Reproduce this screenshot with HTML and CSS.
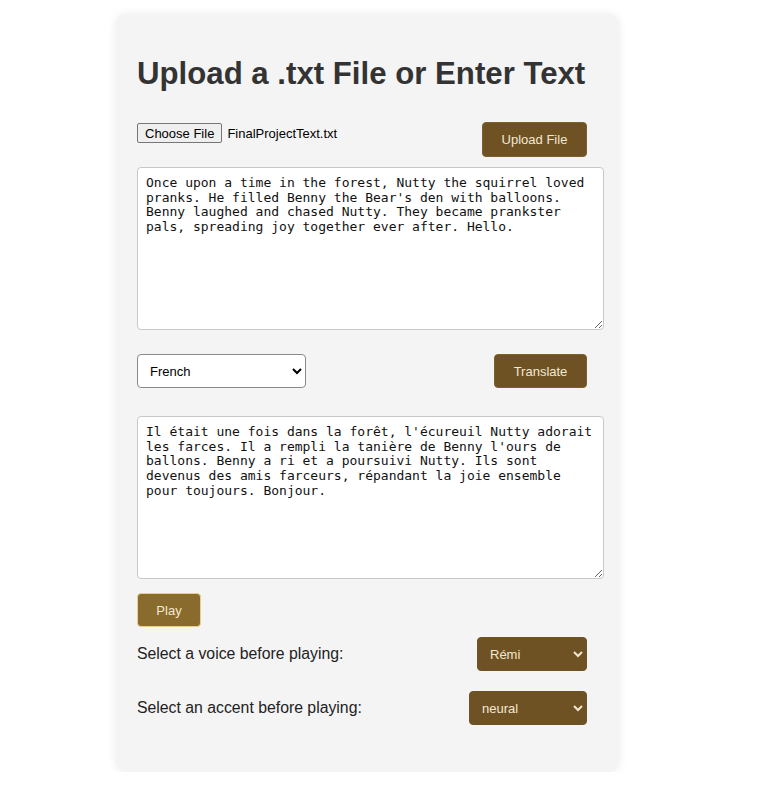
FILE: index.html
```html
<!DOCTYPE html>
<html lang="en">
<head>
<meta charset="utf-8">
<title>Upload a .txt File or Enter Text</title>
<link rel="stylesheet" href="styles.css">
</head>
<body>
<main class="card">
  <h1 class="title">Upload a .txt File or Enter Text</h1>

  <div class="row file-row">
    <div class="file-picker">
      <label class="choose-btn" for="file">Choose File</label>
      <input class="file-hidden" type="file" id="file" accept=".txt">
      <span class="file-name">FinalProjectText.txt</span>
    </div>
    <button class="btn btn-upload" type="button">Upload File</button>
  </div>

  <textarea class="text-box" spellcheck="false">Once upon a time in the forest, Nutty the squirrel loved pranks. He filled Benny the Bear's den with balloons. Benny laughed and chased Nutty. They became prankster pals, spreading joy together ever after. Hello.</textarea>

  <div class="row lang-row">
    <select class="lang-select">
      <option>French</option>
      <option>Spanish</option>
      <option>German</option>
    </select>
    <button class="btn btn-translate" type="button">Translate</button>
  </div>

  <textarea class="text-box text-out" spellcheck="false">Il était une fois dans la forêt, l'écureuil Nutty adorait les farces. Il a rempli la tanière de Benny l'ours de ballons. Benny a ri et a poursuivi Nutty. Ils sont devenus des amis farceurs, répandant la joie ensemble pour toujours. Bonjour.</textarea>

  <button class="btn btn-play" type="button">Play</button>

  <div class="row option-row voice-row">
    <span class="option-label">Select a voice before playing:</span>
    <select class="dark-select voice-select">
      <option>Rémi</option>
      <option>Léa</option>
    </select>
  </div>

  <div class="row option-row accent-row">
    <span class="option-label">Select an accent before playing:</span>
    <select class="dark-select accent-select">
      <option>neural</option>
      <option>standard</option>
    </select>
  </div>
</main>
</body>
</html>
```

FILE: styles.css
```css
html, body {
  margin: 0;
  padding: 0;
  background: #ffffff;
}

body {
  font-family: "Liberation Sans", Arial, sans-serif;
  color: #222;
}

.card {
  box-sizing: border-box;
  width: 503px;
  margin: 14px 0 0 116px;
  padding: 42px 15px 47px 21px;
  background: #f4f4f4;
  border-radius: 10px;
  box-shadow: 0 0 10px rgba(0, 0, 0, 0.08);
}

.title {
  margin: 0;
  font-size: 31.2px;
  line-height: 36px;
  font-weight: bold;
  color: #333;
}

.row {
  display: flex;
  justify-content: space-between;
  padding-right: 17px;
}

.file-row {
  margin-top: 30px;
  align-items: flex-start;
}

.file-picker {
  display: flex;
  align-items: center;
  margin-top: 1px;
  gap: 5px;
}

.choose-btn {
  box-sizing: border-box;
  height: 20px;
  padding: 0 7px;
  display: inline-flex;
  align-items: center;
  font-size: 13px;
  color: #000;
  background: #efefef;
  border: 1px solid #767676;
  border-radius: 2px;
}

.file-hidden {
  display: none;
}

.file-name {
  font-size: 13px;
  color: #000;
}

.btn {
  box-sizing: border-box;
  font-family: "Liberation Sans", Arial, sans-serif;
  font-size: 13px;
  color: #f2e8d2;
  background: #6f5224;
  border: 1px solid #7d5f2c;
  border-radius: 4px;
  cursor: pointer;
}

.btn-upload {
  width: 105px;
  height: 35px;
}

.text-box {
  display: block;
  box-sizing: border-box;
  width: 467px;
  height: 163px;
  margin: 10px 0 0 0;
  padding: 8px;
  font-family: "DejaVu Sans Mono", monospace;
  font-size: 13px;
  line-height: 14.7px;
  color: #111;
  background: #fff;
  border: 1px solid #c8c8c8;
  border-radius: 4px;
  resize: vertical;
}

.lang-row {
  margin-top: 24px;
  align-items: center;
}

.lang-select {
  box-sizing: border-box;
  width: 169px;
  height: 34px;
  padding: 0 8px;
  font-family: "Liberation Sans", Arial, sans-serif;
  font-size: 13px;
  color: #000;
  background: #fff;
  border: 1px solid #8a8a8a;
  border-radius: 4px;
}

.btn-translate {
  width: 93px;
  height: 34px;
}

.text-out {
  margin-top: 28px;
}

.btn-play {
  display: block;
  width: 64px;
  height: 34px;
  margin-top: 14px;
  background: #8a6b2e;
  border-color: #e9cf8c;
}

.option-row {
  align-items: center;
}

.voice-row {
  margin-top: 10px;
}

.accent-row {
  margin-top: 20px;
}

.option-label {
  font-size: 15.8px;
  color: #222;
}

.dark-select {
  box-sizing: border-box;
  height: 34px;
  padding: 0 8px;
  font-family: "Liberation Sans", Arial, sans-serif;
  font-size: 13px;
  color: #f2e8d2;
  background: #6f5224;
  border: 1px solid #6f5224;
  border-radius: 4px;
}

.voice-select {
  width: 110px;
}

.accent-select {
  width: 118px;
}
```
